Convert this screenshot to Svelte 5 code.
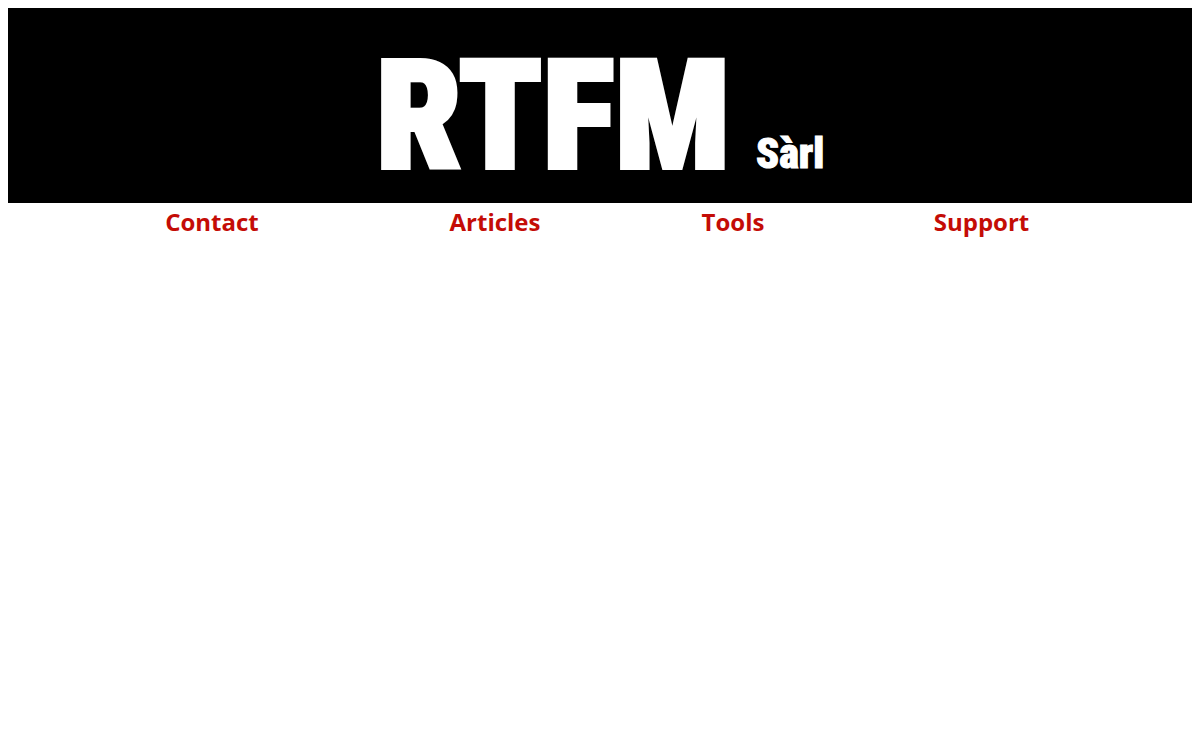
<script>
  const links = ['Contact', 'Articles', 'Tools', 'Support'];
</script>

<header>
  <h1>
    <span class="name">RTFM</span>
    <span class="form">Sàrl</span>
  </h1>
</header>
<nav>
  {#each links as label}
    <a href="#{label.toLowerCase()}">{label}</a>
  {/each}
</nav>

<style>
  :global(body) {
    margin: 8px;
    background: #fff;
  }

  header {
    background: #000;
    color: #fff;
    padding: 23px 16px 2px;
  }

  h1 {
    margin: 0;
    display: flex;
    justify-content: center;
    align-items: baseline;
    gap: 26px;
    font-family: Impact, 'Roboto Condensed', Roboto, sans-serif;
    font-weight: 900;
    line-height: 170px;
  }

  .name {
    font-size: 152px;
    -webkit-text-stroke: 4px #fff;
  }

  .form {
    font-size: 42px;
    line-height: 48px;
    -webkit-text-stroke: 1px #fff;
  }

  nav {
    display: grid;
    grid-template-columns: 300fr 266fr 210fr 287fr;
    padding: 0 67px 0 54px;
  }

  a {
    justify-self: center;
    color: #c40c06;
    font: 700 24px/37px 'Open Sans', 'Noto Sans', sans-serif;
    text-decoration: none;
  }
</style>
